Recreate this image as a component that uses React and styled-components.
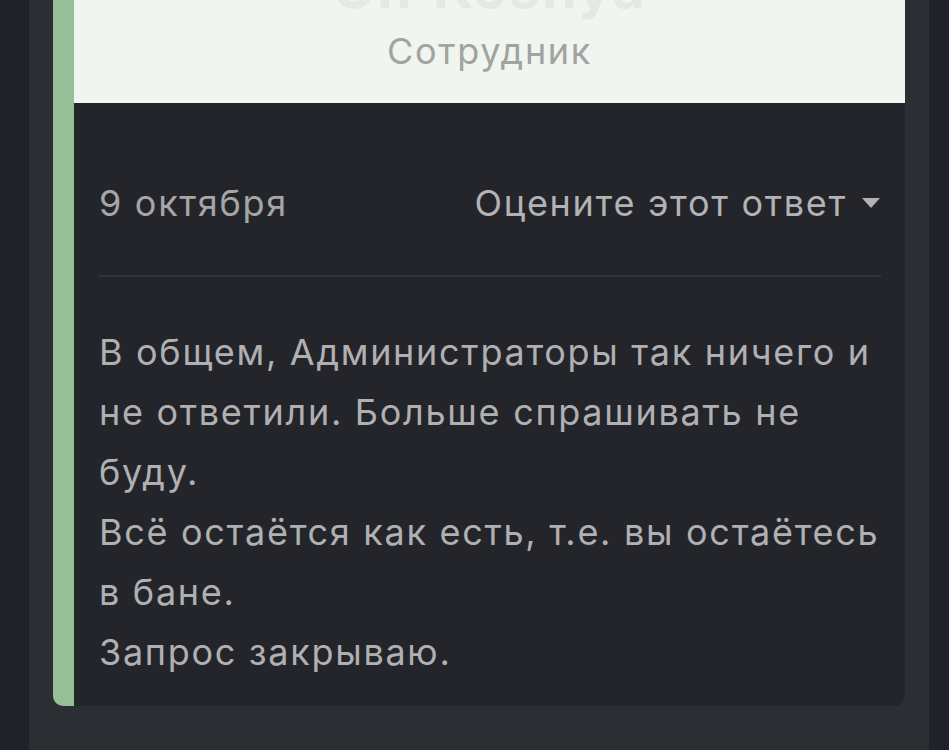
import React from 'react';
import styled, { createGlobalStyle } from 'styled-components';

const GlobalStyle = createGlobalStyle`
  html, body {
    margin: 0;
    padding: 0;
    background: #1f2229;
    overflow: hidden;
  }
  body {
    font-family: Inter, "Noto Sans", sans-serif;
    letter-spacing: 1.7px;
  }
`;

const Page = styled.div`
  margin-left: 29px;
  width: 900px;
  min-height: 750px;
  background: #2b2e33;
  padding: 0 24px;
  box-sizing: border-box;
`;

const Card = styled.div`
  background: #24252b;
  border-left: 21px solid #97bf97;
  border-radius: 0 0 10px 10px;
  overflow: hidden;
`;

const Header = styled.div`
  background: #f0f5ef;
  height: 103px;
  display: flex;
  flex-direction: column;
  align-items: center;
  overflow: hidden;
`;

const Name = styled.div`
  margin-top: -44px;
  font-size: 56px;
  font-weight: 700;
  line-height: 64px;
  color: #e5e9e4;
`;

const Role = styled.div`
  font-size: 36px;
  line-height: 44px;
  color: #a1a3a1;
  margin-top: 9px;
`;

const Body = styled.div`
  padding: 0 24px 24px 25px;
`;

const MetaRow = styled.div`
  display: flex;
  justify-content: space-between;
  align-items: center;
  height: 174px;
  padding-top: 28px;
  box-sizing: border-box;
  border-bottom: 2px solid #313339;
  font-size: 36px;
  color: #a6a6a8;
`;

const Rate = styled.div`
  display: flex;
  align-items: center;
  gap: 14px;
  color: #b3b3b5;
`;

const Text = styled.div`
  padding-top: 45px;
  font-size: 36px;
  line-height: 60px;
  color: #b0b0b2;
`;

export default function App() {
  return (
    <>
      <GlobalStyle />
      <Page>
        <Card>
          <Header>
            <Name>Olf Kosnya</Name>
            <Role>Сотрудник</Role>
          </Header>
          <Body>
            <MetaRow>
              <span>9 октября</span>
              <Rate>
                Оцените этот ответ
                <svg width="20" height="12" viewBox="0 0 20 12">
                  <path d="M1 1 H19 L10 11 Z" fill="#b3b3b5" />
                </svg>
              </Rate>
            </MetaRow>
            <Text>
              В общем, Администраторы так ничего и не ответили. Больше спрашивать не буду.
              <br />
              Всё остаётся как есть, т.е. вы остаётесь в бане.
              <br />
              Запрос закрываю.
            </Text>
          </Body>
        </Card>
      </Page>
    </>
  );
}
